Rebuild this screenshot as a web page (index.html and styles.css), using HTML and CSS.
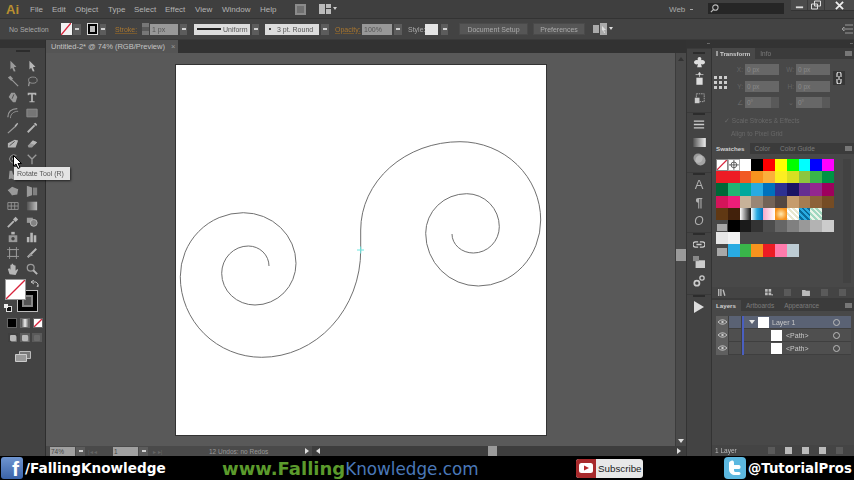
FILE: index.html
```html
<!DOCTYPE html>
<html lang="en">
<head>
<meta charset="utf-8">
<title>Adobe Illustrator</title>
<link rel="stylesheet" href="styles.css">
</head>
<body>
<div class="app">
  <header class="menubar">
    <span class="ai">Ai</span>
    <nav class="menus"><span class="m1">File</span><span class="m2">Edit</span><span class="m3">Object</span><span class="m4">Type</span><span class="m5">Select</span><span class="m6">Effect</span><span class="m7">View</span><span class="m8">Window</span><span class="m9">Help</span></nav>
    <span class="bridge"></span>
    <span class="arrange"><svg viewBox="0 0 18 10" width="18" height="10"><path fill="#bbb" d="M0 0h6v10H0zM7 0h5v4H7zM7 5h5v5H7z"/><path fill="#ccc" d="M14 3h4l-2 3z"/></svg></span>
    <span class="web">Web</span><span class="web-arrow"></span>
    <span class="search"><svg viewBox="0 0 10 10" width="9" height="9"><circle cx="6" cy="4" r="3" fill="none" stroke="#bbb" stroke-width="1.2"/><path d="M4 6L1 9" stroke="#bbb" stroke-width="1.4"/></svg></span>
    <span class="winctl">
      <span class="wbtn"><svg viewBox="0 0 10 10" width="9" height="9"><path d="M1 7h8" stroke="#ddd" stroke-width="2"/></svg></span>
      <span class="wbtn"><svg viewBox="0 0 10 10" width="10" height="10"><path d="M3.5 1h6v5h-6zM.5 4h6v5h-6z" fill="none" stroke="#ddd"/></svg></span>
      <span class="wbtn wide"><svg viewBox="0 0 10 10" width="9" height="9"><path d="M1 1l8 8M9 1L1 9" stroke="#eee" stroke-width="2"/></svg></span>
    </span>
  </header>

  <div class="controlbar">
    <span class="noselect">No Selection</span>
    <span class="sw-fill"><svg viewBox="0 0 10 12" width="10" height="12"><path d="M0 12L10 0" stroke="#d8243c" stroke-width="1.4"/></svg></span><span class="carrow a1"></span>
    <span class="sw-stroke"><i></i></span><span class="carrow a2"></span>
    <span class="olabel stroke-l">Stroke:</span>
    <span class="stepper"></span>
    <span class="inp w-stroke">1 px</span><span class="carrow a3"></span>
    <span class="lightbox w-uniform"><b class="line"></b>Uniform</span><span class="carrow a4"></span>
    <span class="lightbox w-round"><b class="dot"></b>3 pt. Round</span><span class="carrow a5"></span>
    <span class="olabel op-l">Opacity:</span>
    <span class="inp w-op">100%</span><span class="carrow a6"></span>
    <span class="plain style-l">Style:</span>
    <span class="style-sw"></span><span class="carrow a7"></span>
    <span class="cbtn w-doc">Document Setup</span>
    <span class="cbtn w-pref">Preferences</span>
    <svg class="isolate" viewBox="0 0 20 12" width="20" height="12"><path fill="#aaa" d="M0 2h6v8H0zM7 0h7v12H7z"/><path fill="#ddd" d="M9 3l4 4-2 0 1 3-1 0-1-3-1 1z"/><path fill="#ddd" d="M16 4h4l-2 3z"/></svg>
    <svg class="ctlmenu" viewBox="0 0 11 10" width="11" height="10"><path d="M3 1h8M3 5h8M3 9h8M0 5l2-2v4z" stroke="#999" fill="none"/></svg>
  </div>

  <div class="workspace">
    <aside class="toolbar">
      <div class="strip"></div>
      <div class="toolbody">
        <div class="grip"></div>
        <div class="tools">
          <svg class="ti" viewBox="0 0 14 14"><path class="f" d="M4 1l7 7-3 .5L10 13l-2 .5L6 9l-2 2z"/></svg>
          <svg class="ti" viewBox="0 0 14 14"><path class="f hi" d="M4 1l7 7-3 .5L10 13l-2 .5L6 9l-2 2z"/></svg>
          <svg class="ti" viewBox="0 0 14 14"><path class="s w" d="M6 6l7 7"/><path class="f" d="M1 3l3-2 3 3-2 3z"/></svg>
          <svg class="ti" viewBox="0 0 14 14"><ellipse class="s" cx="8" cy="6" rx="5" ry="3.6"/><path class="s w" d="M4 8l-1 5"/></svg>
          <svg class="ti" viewBox="0 0 14 14"><path class="f" d="M7 13L2 7l3-5 4 0 3 5-2 6z"/><path d="M6 9l2-5" stroke="#444"/></svg>
          <svg class="ti" viewBox="0 0 14 14"><path class="f hi" d="M2 2h10v3h-1l-1-1H8v8h2v1H4v-1h2V4H4L3 5H2z"/></svg>
          <svg class="ti" viewBox="0 0 14 14"><path class="s w" d="M1 12C1 6 5 2 12 2"/><path class="s" d="M4 13C4 8 8 5 13 5"/></svg>
          <svg class="ti" viewBox="0 0 14 14"><path fill="#7d7d7d" stroke="#999" d="M1 2.5h12v9H1z"/></svg>
          <svg class="ti" viewBox="0 0 14 14"><path class="s w" d="M1 13L10 5"/><path class="f hi" d="M9 4l3-3 1 1-3 4z"/></svg>
          <svg class="ti" viewBox="0 0 14 14"><path class="s wb" d="M2 12l8-8"/><path class="f hi" d="M9 2l3 3 1-2-2-2z"/></svg>
          <svg class="ti" viewBox="0 0 14 14"><path class="f hi" d="M1 6l8-4 4 1-3 8H1z"/><path d="M3 9l6-5" stroke="#444"/></svg>
          <svg class="ti" viewBox="0 0 14 14"><path class="f" d="M2 9l6-6 5 2-6 6H3z"/><path class="f hi" d="M8 3l5 2-3 3-5-2z"/></svg>
          <svg class="ti" viewBox="0 0 14 14"><path class="s" d="M11 11A5 5 0 1 1 11 3"/><circle class="f" cx="7" cy="7" r="1.3"/></svg>
          <svg class="ti" viewBox="0 0 14 14"><path class="s w" d="M2 2l5 5 5-5M7 7v6"/></svg>
          <svg class="ti" viewBox="0 0 14 14"><path class="f" d="M3 2l3 0 1 4 4 3-2 4-4-2-3 1z"/></svg>
          <svg class="ti" viewBox="0 0 14 14"><path class="s" d="M2 2h10v10H2z"/><path class="f" d="M5 1h4v12H5z"/></svg>
          <svg class="ti" viewBox="0 0 14 14"><path class="f" d="M1 6l5-4 7 3-1 6-6 1z"/><path class="s" d="M1 6l5 2 7-3M6 8v4" stroke="#444"/></svg>
          <svg class="ti" viewBox="0 0 14 14"><path class="f" d="M1 1l6 2v9l-6 2z"/><path fill="#888" d="M8 3h5v9H8z"/></svg>
          <svg class="ti" viewBox="0 0 14 14"><path class="s" d="M1 3h12v8H1zM1 7h12M5 3v8M9 3v8"/></svg>
          <svg class="ti" viewBox="0 0 14 14"><defs><linearGradient id="g1"><stop offset="0" stop-color="#555"/><stop offset="1" stop-color="#ccc"/></linearGradient></defs><path fill="url(#g1)" d="M1 2h12v10H1z"/></svg>
          <svg class="ti" viewBox="0 0 14 14"><path class="s wb" d="M1 13l7-7"/><path class="f hi" d="M7 4l3-3 3 3-3 3z"/></svg>
          <svg class="ti" viewBox="0 0 14 14"><path class="f" d="M1 2h7v6H1z"/><circle cx="9" cy="8" r="4" fill="#8a8a8a" stroke="#ccc"/></svg>
          <svg class="ti" viewBox="0 0 14 14"><path class="f" d="M2 5h10v8H2z"/><path class="f hi" d="M5 1h4v3H5z"/><circle cx="7" cy="9" r="2" fill="#444"/></svg>
          <svg class="ti" viewBox="0 0 14 14"><path class="f hi" d="M1 7h3v6H1zM5 2h3v11H5zM9 5h3v8H9z"/></svg>
          <svg class="ti" viewBox="0 0 14 14"><path class="s" d="M3 3h8v8H3zM0 3h14M0 11h14M3 0v14M11 0v14"/></svg>
          <svg class="ti" viewBox="0 0 14 14"><path class="s wb" d="M2 12L12 2"/><path class="f" d="M2 12l3-5 3 3z"/></svg>
          <svg class="ti" viewBox="0 0 14 14"><path class="f hi" d="M3 13L1 7l2-1 1 2V2h1.500v4-5H7v5-4h1.500v4-3H10v6l2-2 1 1-3 6z"/></svg>
          <svg class="ti" viewBox="0 0 14 14"><circle class="s w" cx="5.500" cy="5.500" r="4"/><path class="s wb" d="M8.500 8.500l4.500 4.500"/></svg>
        </div>
        <div class="fillstroke">
          <div class="stroke-box"><i></i></div>
          <div class="fill-box"><svg viewBox="0 0 21 21"><path d="M0 21L21 0" stroke="#d8243c" stroke-width="1.5"/></svg></div>
          <svg class="swap" viewBox="0 0 8 8" width="8" height="8"><path d="M0 2h5l2 2v3M6 7L7 5M3 0L0 2l3 2" fill="none" stroke="#bbb"/></svg>
          <svg class="deflt" viewBox="0 0 8 8" width="8" height="8"><rect x="2.500" y="2.500" width="5" height="5" fill="#111" stroke="#ddd"/><rect width="4" height="4" fill="#eee"/></svg>
        </div>
        <div class="modes">
          <span class="mode black"></span><span class="mode grad"></span>
          <span class="mode none"><svg viewBox="0 0 9 9"><path d="M0 9L9 0" stroke="#d8243c" stroke-width="1.500"/></svg></span>
        </div>
        <div class="draws"><span class="draw"></span><span class="draw on"></span><span class="draw dim"></span></div>
        <div class="screen"><svg viewBox="0 0 16 11" width="16" height="11"><path d="M4.500 .5h11v7h-11z" fill="#777" stroke="#bbb"/><path d="M.5 3.500h11v7H.5z" fill="#999" stroke="#ccc"/></svg></div>
      </div>
    </aside>

    <main class="doc">
      <div class="tabs"><div class="tab">Untitled-2* @ 74% (RGB/Preview) <em>×</em></div></div>
      <div class="stage">
        <div class="canvas">
          <div class="artboard">
            <svg class="art" viewBox="176 65 370 370" aria-label="Spiral artwork">
              <path class="curve" d="M269 266A20.700 20 0 0 0 248.300 246A26.600 27.300 0 0 0 221.700 273.300A33.300 31.700 0 0 0 255 305A41 41.700 0 0 0 296 263.300A52.700 50.600 0 0 0 243.300 212.700A63 64 0 0 0 180.300 276.700A81.400 80.600 0 0 0 261.700 357.300A99 107 0 0 0 360.700 250L360.700 230A99.300 88.300 0 0 1 460 141.700A80.700 78.300 0 0 1 540.700 220A62.400 66 0 0 1 478.300 286A52.600 52.700 0 0 1 425.700 233.300A41 39.600 0 0 1 466.700 193.700A32.600 33 0 0 1 499.300 226.700A26 26.300 0 0 1 473.300 253A21.300 19 0 0 1 452 234"/>
              <path class="mark" d="M357 250h7M360.700 246.500v7"/>
            </svg>
          </div>
        </div>
        <div class="vscroll"><span class="up"></span><span class="vthumb"></span><span class="down"></span></div>
      </div>
      <div class="status">
        <span class="sinp w-zoom">74%</span><span class="carrow s1"></span>
        <span class="nav n1">|◂ ◂</span>
        <span class="sinp w-page">1</span><span class="carrow s2"></span>
        <span class="nav n2">▸ ▸|</span>
        <span class="undos">12 Undos: no Redos</span>
        <span class="tri-r"></span>
        <div class="hscroll"><span class="tri-l"></span><span class="hthumb"></span><span class="tri-r end"></span></div>
      </div>
    </main>

    <aside class="dock">
      <div class="strip"><span class="dots">▪▪</span></div>
      <div class="dockbody">
        <div class="dgroup g1">
          <svg viewBox="0 0 14 14" width="11" height="11"><path fill="#ddd" d="M7 0c2 0 3 2 2 4 3-1 5 1 5 3s-3 3-5 2l1 4H4l1-4c-2 1-5 0-5-2s2-4 5-3C4 2 5 0 7 0z"/></svg>
          <svg viewBox="0 0 14 16" width="11" height="13"><path fill="#ddd" d="M3 7h8v9H3z"/><path stroke="#ccc" d="M7 0v6M2 3h10" fill="none"/><circle cx="7" cy="2" r="1.500" fill="#ddd"/></svg>
          <svg viewBox="0 0 14 14" width="11" height="11"><path fill="none" stroke="#bbb" stroke-dasharray="2 1" d="M3 1h10v10H3z"/><path fill="#ccc" d="M1 6h6v7H1z"/></svg>
        </div>
        <div class="dgroup g2">
          <svg viewBox="0 0 14 10" width="12" height="9"><path stroke="#ccc" stroke-width="1.500" d="M1 1h12M1 5h12M1 9h12"/></svg>
          <svg viewBox="0 0 14 10" width="13" height="9"><defs><linearGradient id="g2"><stop offset="0" stop-color="#555"/><stop offset="1" stop-color="#f0f0f0"/></linearGradient></defs><path fill="url(#g2)" d="M0 0h14v10H0z"/></svg>
          <svg viewBox="0 0 14 14" width="13" height="13"><circle cx="5.500" cy="5.500" r="5" fill="#999"/><circle cx="8" cy="8" r="5.500" fill="#c4c4c4" opacity=".75"/></svg>
        </div>
        <div class="dgroup g3">
          <span class="dtxt">A</span><span class="dtxt para">¶</span><span class="dtxt ot">O</span>
        </div>
        <div class="dgroup g4">
          <svg viewBox="0 0 14 8" width="12" height="7"><path fill="none" stroke="#ccc" stroke-width="1.500" d="M6 1H3a3 3 0 0 0 0 6h3M8 1h3a3 3 0 0 1 0 6H8M4 4h6"/></svg>
          <svg viewBox="0 0 14 14" width="12" height="12"><path fill="#ccc" d="M3 5h11v9H3z"/><path fill="#888" d="M0 0h7v6H0z"/></svg>
          <svg viewBox="0 0 14 14" width="12" height="12"><circle cx="4.500" cy="9.500" r="3" fill="none" stroke="#ccc" stroke-width="2"/><circle cx="10.500" cy="3.500" r="2.500" fill="none" stroke="#ccc" stroke-width="1.500"/></svg>
        </div>
        <div class="dgroup g5">
          <svg viewBox="0 0 10 12" width="10" height="12"><path fill="#ddd" d="M0 0l10 6-10 6z"/></svg>
        </div>
      </div>
    </aside>

    <aside class="panels">
      <div class="strip"><span class="dots">▪▪</span></div>

      <section class="panel p-transform">
        <div class="ptabs"><span class="ptab on">Transform</span><span class="ptab">Info</span><span class="pmenu"></span></div>
        <div class="tbody">
          <div class="refgrid"><i></i><i></i><i></i><i></i><i></i><i></i><i></i><i></i><i></i></div>
          <div class="fields">
            <label>X:</label><span class="finp">0 px</span><label>W:</label><span class="finp">0 px</span>
            <label>Y:</label><span class="finp">0 px</span><label>H:</label><span class="finp">0 px</span>
            <label>∠</label><span class="finp sel">0°</span><label>⌄</label><span class="finp sel">0°</span>
          </div>
          <span class="linkbtn"><svg viewBox="0 0 6 12" width="6" height="12"><path d="M1 5V2a2 2 0 0 1 4 0v3M1 7v3a2 2 0 0 0 4 0V7M3 4v4" fill="none" stroke="#ddd" stroke-width="1.200"/></svg></span>
        </div>
        <div class="chk c1">✓ Scale Strokes &amp; Effects</div>
        <div class="chk c2">Align to Pixel Grid</div>
      </section>

      <section class="panel p-swatches">
        <div class="ptabs"><span class="ptab on">Swatches</span><span class="ptab">Color</span><span class="ptab">Color Guide</span><span class="pmenu"></span></div>
        <div class="swbody">
          <div class="swatches">
            <i class="sn"><svg viewBox="0 0 12 12"><path d="M0 12L12 0" stroke="#d8243c" stroke-width="1.500"/></svg></i>
            <i class="st"><svg viewBox="0 0 12 12"><circle cx="6" cy="6" r="3.500" fill="none" stroke="#444"/><path d="M6 0v12M0 6h12" stroke="#444"/></svg></i>
            <i class="c-fff"></i><i class="c-000"></i><i class="c-f00"></i><i class="c-ff0"></i><i class="c-0f0"></i><i class="c-0ff"></i><i class="c-00f"></i><i class="c-f0f"></i>
            <i class="c-ed1"></i><i class="c-ed1b"></i><i class="c-f15"></i><i class="c-f79"></i><i class="c-fbb"></i><i class="c-fce"></i><i class="c-d9e"></i><i class="c-8cc"></i><i class="c-39b"></i><i class="c-009"></i>
            <i class="c-006"></i><i class="c-22b"></i><i class="c-00a"></i><i class="c-29a"></i><i class="c-007"></i><i class="c-2e3"></i><i class="c-1b1"></i><i class="c-662"></i><i class="c-932"></i><i class="c-9e0"></i>
            <i class="c-d41"></i><i class="c-ed2"></i><i class="c-c7b"></i><i class="c-998"></i><i class="c-736"></i><i class="c-534"></i><i class="c-c69"></i><i class="c-a67"></i><i class="c-8c6"></i><i class="c-754"></i>
            <i class="c-603"></i><i class="c-422"></i><i class="gr1"></i><i class="gr2"></i><i class="gr3"></i><i class="gr4"></i><i class="pt1"></i><i class="pt2"></i><i class="pt3"></i><i class="blank"></i>
            <i class="folder"></i><i class="c-000"></i><i class="c-1a"></i><i class="c-33"></i><i class="c-4d"></i><i class="c-66"></i><i class="c-80"></i><i class="c-99"></i><i class="c-b3"></i><i class="c-cc"></i>
            <i class="c-e6"></i><i class="c-f2"></i><i class="blank"></i><i class="blank"></i><i class="blank"></i><i class="blank"></i><i class="blank"></i><i class="blank"></i><i class="blank"></i><i class="blank"></i>
            <i class="folder"></i><i class="c-29a"></i><i class="c-39b"></i><i class="c-f79"></i><i class="c-ed1"></i><i class="c-ff7"></i><i class="c-bdc"></i>
          </div>
          <div class="swscroll"></div>
        </div>
        <div class="pfoot swfoot">
          <svg class="fic" viewBox="0 0 9 8"><path fill="#bbb" d="M0 0h1.500v8H0zM2.500 0H4v8H2.500zM5 1l1.500-.5 2 7L7 8z"/></svg>
          <svg class="fic spread" viewBox="0 0 9 8"><path fill="#bbb" d="M0 0h3v3H0zM4 0h3v3H4zM0 4h3v3H0zM4 4h3v3H4z"/><path fill="#ddd" d="M7 6h2L8 8z"/></svg>
          <span class="fi dim"></span>
          <svg class="fic" viewBox="0 0 9 8"><path fill="#bbb" d="M0 1h3.500l1 1H9v6H0z"/></svg>
          <span class="fi dim"></span><span class="fi dim"></span>
        </div>
      </section>

      <section class="panel p-layers">
        <div class="ptabs"><span class="ptab on">Layers</span><span class="ptab">Artboards</span><span class="ptab">Appearance</span><span class="pmenu"></span></div>
        <div class="lbody">
          <div class="lrow top">
            <span class="eye"><svg viewBox="0 0 10 6" width="9" height="6"><path d="M0 3q5-5 10 0q-5 5-10 0z" fill="none" stroke="#ccc"/><circle cx="5" cy="3" r="1.300" fill="#ccc"/></svg></span><span class="lock"></span><span class="bar"></span>
            <span class="disc"></span><span class="thumb big"></span><span class="lname">Layer 1</span><span class="tgt"></span>
          </div>
          <div class="lrow">
            <span class="eye"><svg viewBox="0 0 10 6" width="9" height="6"><path d="M0 3q5-5 10 0q-5 5-10 0z" fill="none" stroke="#ccc"/><circle cx="5" cy="3" r="1.300" fill="#ccc"/></svg></span><span class="lock"></span><span class="bar"></span>
            <span class="indent"></span><span class="thumb"></span><span class="lname">&lt;Path&gt;</span><span class="tgt"></span>
          </div>
          <div class="lrow">
            <span class="eye"><svg viewBox="0 0 10 6" width="9" height="6"><path d="M0 3q5-5 10 0q-5 5-10 0z" fill="none" stroke="#ccc"/><circle cx="5" cy="3" r="1.300" fill="#ccc"/></svg></span><span class="lock"></span><span class="bar"></span>
            <span class="indent"></span><span class="thumb"></span><span class="lname">&lt;Path&gt;</span><span class="tgt"></span>
          </div>
        </div>
        <div class="pfoot lfoot">
          <span class="lcount">1 Layer</span>
          <span class="fi dim"></span><span class="fi"></span><span class="fi"></span><span class="fi"></span><span class="fi dim"></span>
        </div>
      </section>
    </aside>

    <div class="tooltip">Rotate Tool (R)</div>
    <svg class="cursor" viewBox="0 0 9 14" width="9" height="14"><path d="M.5.5v10.500l2.500-2 2 4.500 2-1-2-4h3.500z" fill="#fff" stroke="#000"/></svg>
  </div>

  <footer class="promo">
    <span class="fb">f</span>
    <span class="handle h-fb">/FallingKnowledge</span>
    <span class="site"><b class="g">www.Falling</b><span class="bl">Knowledge.com</span></span>
    <span class="yt"><span class="yt-r"><svg viewBox="0 0 14 10" width="14" height="10"><rect width="14" height="10" rx="2.500" fill="#fff"/><path d="M5 2.500l5 2.500-5 2.500z" fill="#b5292c"/></svg></span><span class="yt-t">Subscribe</span></span>
    <span class="tw"><svg viewBox="0 0 22 22" width="22" height="22"><path fill="#fff" d="M7 4c2-1 3 0 3 2v2h5c2 0 2 4 0 4h-5v1c0 2 1 2 2 2h3c2 0 2 3 0 3h-4c-3 0-6-2-6-6V6c0-1 1-2 2-2z"/></svg></span>
    <span class="handle h-tw">@TutorialPros</span>
  </footer>
</div>
</body>
</html>
```

FILE: styles.css
```css
* { box-sizing: border-box; }
html, body { margin: 0; padding: 0; }
body { width: 854px; height: 480px; overflow: hidden; background: #000; font-family: "Liberation Sans", Arial, sans-serif; }
svg { display: block; flex: none; }
i, em { font-style: normal; }

.app { width: 854px; height: 480px; display: flex; flex-direction: column; filter: blur(.5px); }

/* Menu bar */
.menubar { height: 19px; flex: none; background: #3f3f3f; display: flex; align-items: center; color: #b4b4b4; font-size: 8px; border-bottom: 1px solid #333; }
.menubar > * { flex: none; }
.ai { width: 30px; padding-left: 6px; color: #b98f30; font-weight: bold; font-size: 13px; }
.menus { display: flex; width: 262px; }
.menus span { display: block; }
.m1 { width: 22px; } .m2 { width: 23px; } .m3 { width: 33px; } .m4 { width: 26px; } .m5 { width: 31px; } .m6 { width: 30px; } .m7 { width: 27px; } .m8 { width: 38px; } .m9 { width: 32px; }
.bridge { width: 11px; height: 11px; margin-left: 3px; background: #707070; border: 2px solid #8b8b8b; }
.arrange { margin-left: 13px; }
.web { margin-left: 332px; width: 19px; color: #aaa; }
.web-arrow { width: 3px; height: 1px; background: #aaa; margin-right: 15px; margin-left: 2px; }
.search { width: 76px; height: 11px; margin-top: -2px; background: #262626; padding: 1px 0 0 2px; }
.winctl { display: flex; margin-left: 7px; height: 11px; align-self: flex-start; background: #4b4b4b; border-bottom: 1px solid #333; }
.wbtn { width: 17px; display: flex; align-items: center; justify-content: center; border-right: 1px solid #3a3a3a; }
.wbtn.wide { width: 29px; border: 0; }

/* Control bar */
.controlbar { height: 21px; flex: none; background: #434343; display: flex; align-items: center; font-size: 7px; color: #a8a8a8; border-bottom: 1px solid #3a3a3a; position: relative; }
.controlbar > * { flex: none; }
.noselect { margin-left: 9px; width: 52px; }
.sw-fill { width: 11px; height: 12px; background: #f2f2f2; }
.carrow { width: 8px; height: 11px; background: #5c5c5c; position: relative; flex: none; }
.carrow::after { content: ""; display: block; width: 4px; height: 2px; background: #d0d0d0; margin: 4px auto 0; }
.a1 { margin-left: 1px; }
.sw-stroke { width: 11px; height: 12px; margin-left: 6px; background: #000; border: 1px solid #ddd; padding: 2px; }
.sw-stroke i { display: block; width: 5px; height: 6px; background: #bbb; }
.a2 { margin-left: 2px; width: 6px; }
.olabel { color: #a8762f; text-decoration: underline; text-decoration-color: #775a30; }
.stroke-l { margin-left: 9px; width: 27px; }
.stepper { width: 7px; height: 12px; background: #5a5a5a; border-top: 4px solid #777; border-bottom: 4px solid #777; }
.inp { height: 11px; line-height: 11px; background: #989898; color: #555; padding-left: 2px; }
.w-stroke { width: 28px; margin-left: 1px; }
.a3 { margin-left: 2px; width: 7px; }
.lightbox { height: 11px; line-height: 11px; background: #dcdcdc; color: #555; display: flex; align-items: center; white-space: nowrap; }
.w-uniform { width: 56px; margin-left: 7px; padding-left: 3px; }
.line { width: 24px; height: 2px; background: #222; margin-right: 2px; }
.a4 { margin-left: 2px; width: 7px; }
.w-round { width: 54px; margin-left: 6px; padding-left: 4px; }
.dot { width: 2px; height: 2px; background: #444; margin-right: 6px; }
.a5 { margin-left: 2px; }
.op-l { margin-left: 6px; width: 27px; }
.w-op { width: 30px; }
.a6 { margin-left: 2px; }
.plain { color: #aaa; }
.style-l { margin-left: 6px; width: 17px; }
.style-sw { width: 13px; height: 11px; background: #e4e4e4; }
.a7 { margin-left: 3px; width: 7px; }
.cbtn { height: 12px; line-height: 11px; text-align: center; background: #565656; color: #aaa; border: 1px solid #4a4a4a; }
.w-doc { width: 69px; margin-left: 11px; }
.w-pref { width: 52px; margin-left: 5px; }
.isolate { margin-left: 8px; }
.ctlmenu { margin-left: 229px; }

/* Workspace */
.workspace { flex: 1; min-height: 0; display: flex; position: relative; background: #3a3a3a; }
.strip { height: 8px; background: #333; position: relative; color: #888; font-size: 4px; line-height: 8px; text-align: right; }
.dots { padding-right: 1px; }

/* Tools */
.toolbar { width: 46px; flex: none; display: flex; flex-direction: column; background: #434343; border-right: 1px solid #2e2e2e; }
.toolbody { flex: 1; padding-left: 3px; }
.grip { height: 2px; width: 14px; margin: 2px 0 0 13px; background: #2c2c2c; }
.tools { display: grid; grid-template-columns: 19px 19px; grid-auto-rows: 15.600px; margin-top: 6px; justify-items: center; align-items: center; }
.ti { width: 12px; height: 12px; opacity: .9; }
.f { fill: #a4a4a4; }
.hi { fill: #c4c4c4; }
.s { fill: none; stroke: #a4a4a4; }
.w { stroke-width: 1.500px; }
.wb { stroke-width: 2.200px; stroke: #c4c4c4; }

.fillstroke { position: relative; margin-top: 3px; width: 36px; height: 33px; }
.fill-box { position: absolute; left: 2px; top: 0; width: 21px; height: 21px; background: #fff; border: 1px solid #999; }
.stroke-box { position: absolute; left: 14px; top: 11px; width: 21px; height: 22px; background: #000; border: 1px solid #bbb; padding: 4px; }
.stroke-box i { display: block; width: 11px; height: 12px; background: #555; border: 2px solid #888; }
.swap { position: absolute; left: 28px; top: 1px; }
.deflt { position: absolute; left: 1px; top: 25px; }
.modes { display: flex; gap: 3px; margin-top: 6px; padding-left: 4px; }
.mode { width: 10px; height: 10px; border: 1px solid #666; }
.black { background: #000; }
.grad { background: linear-gradient(90deg, #444, #eee, #555); }
.none { background: #fff; }
.draws { display: flex; gap: 2px; margin-top: 5px; padding-left: 5px; }
.draw { width: 10px; height: 9px; background: #3f3f3f; display: flex; align-items: center; justify-content: center; }
.draw::before { content: ""; width: 6px; height: 6px; border-radius: 1px; background: #b8b8b8; box-shadow: 1px 1px 0 #777; }
.draw.on { background: #5e5e5e; }
.draw.dim { background: #5a5a5a; }
.draw.dim::before { background: #6a6a6a; box-shadow: none; }
.screen { margin: 9px 0 0 12px; }

/* Document */
.doc { width: 640px; flex: none; display: flex; flex-direction: column; }
.tabs { height: 13px; flex: none; background: #323232; }
.tab { width: 132px; height: 13px; background: #555; color: #c4c4c4; font-size: 7.500px; line-height: 13px; padding-left: 5px; white-space: nowrap; }
.tab em { color: #999; margin-left: 4px; }
.stage { flex: 1; min-height: 0; display: flex; }
.canvas { flex: 1; background: #595959; padding: 12px 0 0 130px; }
.artboard { width: 370px; height: 370px; background: #fff; box-shadow: 0 0 0 1px #333; }
.art { width: 370px; height: 370px; }
.curve { fill: none; stroke: #707070; stroke-width: 1; }
.mark { fill: none; stroke: #6fe6e0; stroke-width: 1; }
.vscroll { width: 11px; flex: none; background: #4a4a4a; display: flex; flex-direction: column; align-items: center; border-left: 1px solid #3c3c3c; }
.vthumb { width: 10px; height: 12px; margin-top: 188px; background: #9a9a9a; }
.up { width: 0; height: 0; margin-top: 4px; border: 3px solid transparent; border-top: 0; border-bottom: 4px solid #333; }
.down { width: 0; height: 0; margin-top: auto; margin-bottom: 3px; border: 3px solid transparent; border-bottom: 0; border-top: 4px solid #ddd; }

.status { height: 10px; flex: none; background: #4a4a4a; display: flex; align-items: center; font-size: 6.500px; color: #999; }
.status > * { flex: none; }
.sinp { height: 9px; line-height: 9px; background: #a0a0a0; color: #444; padding-left: 1px; }
.status .carrow { height: 9px; }
.status .carrow::after { margin-top: 3px; }
.w-zoom { width: 25px; margin-left: 4px; }
.s1 { margin-left: 1px; width: 9px; }
.nav { color: #666; font-size: 6px; }
.n1 { width: 25px; margin-left: 3px; }
.w-page { width: 25px; }
.s2 { margin-left: 1px; width: 9px; }
.n2 { width: 56px; margin-left: 5px; }
.undos { width: 96px; }
.tri-r { width: 0; height: 0; border: 3px solid transparent; border-right: 0; border-left: 4px solid #ddd; }
.status .hscroll { flex: 1; height: 10px; margin-left: 3px; background: #3d3d3d; display: flex; align-items: center; padding-left: 4px; }
.tri-l { width: 0; height: 0; border: 3px solid transparent; border-left: 0; border-right: 4px solid #ddd; }
.hthumb { width: 9px; height: 10px; margin-left: 168px; background: #9a9a9a; }
.tri-r.end { margin-left: auto; margin-right: 5px; }

/* Dock */
.dock { width: 26px; flex: none; display: flex; flex-direction: column; background: #434343; border-right: 1px solid #333; border-left: 1px solid #333; }
.dockbody { flex: 1; display: flex; flex-direction: column; }
.dgroup { display: flex; flex-direction: column; align-items: center; border-top: 1px solid #3a3a3a; }
.dgroup::before { content: ""; width: 12px; height: 2px; flex: none; background: #2c2c2c; }
.g1 { height: 64px; padding-top: 3px; }
.g1 svg:nth-of-type(1) { margin-top: 3px; }
.g1 svg:nth-of-type(2) { margin-top: 4px; }
.g1 svg:nth-of-type(3) { margin-top: 8px; }
.g2 { height: 60px; }
.g2 svg:nth-of-type(1) { margin-top: 5px; }
.g2 svg:nth-of-type(2) { margin-top: 9px; }
.g2 svg:nth-of-type(3) { margin-top: 6px; }
.g3 { height: 60px; gap: 2px; }
.dtxt { height: 16px; line-height: 16px; font-size: 13px; color: #b0b0b0; }
.para { font-weight: bold; }
.ot { font-style: italic; font-size: 12px; }
.g4 { height: 62px; }
.g4 svg:nth-of-type(1) { margin-top: 6px; }
.g4 svg:nth-of-type(2) { margin-top: 8px; }
.g4 svg:nth-of-type(3) { margin-top: 7px; }
.g5 svg { margin-top: 4px; }

/* Panels */
.panels { flex: 1; min-width: 0; display: flex; flex-direction: column; background: #3a3a3a; }
.panel { display: flex; flex-direction: column; background: #484848; font-size: 7px; color: #999; }
.ptabs { height: 11px; flex: none; display: flex; align-items: stretch; background: #3b3b3b; line-height: 11px; position: relative; font-size: 6.500px; }
.ptab { padding: 0 5px; color: #7b7b7b; white-space: nowrap; }
.ptab.on { background: #484848; color: #cfcfcf; font-weight: bold; font-size: 6.200px; padding: 0 5px 0 4px; }
.p-transform .ptab.on { padding-left: 8px; }
.p-transform .ptab.on::before { content: ""; display: inline-block; width: 2px; height: 5px; margin: 0 2px 0 -4px; background: #9a9a9a; }
.pmenu { width: 7px; height: 5px; margin: 3px 2px 0 auto; background: #777; }

.p-transform { height: 95px; }
.tbody { display: flex; padding-top: 5px; height: 44px; }
.refgrid { display: grid; grid-template-columns: repeat(3, 3px); grid-auto-rows: 3px; gap: 2px; margin: 12px 0 0 2px; width: 14px; flex: none; }
.refgrid i { background: #ccc; }
.fields { display: grid; grid-template-columns: 17px 34px 17px 34px; grid-auto-rows: 11px; row-gap: 5.500px; width: 102px; flex: none; color: #666; font-size: 6.500px; }
.fields label { text-align: right; padding-right: 2px; line-height: 11px; }
.finp { background: #676767; color: #8a8a8a; line-height: 11px; padding-left: 2px; }
.sel { border-right: 8px solid #595959; }
.linkbtn { width: 12px; height: 14px; margin: 7px 0 0 3px; background: #363636; display: flex; align-items: center; justify-content: center; flex: none; }
.chk { padding-left: 12px; color: #686868; font-size: 6.500px; }
.c1 { margin-top: 14px; }
.c2 { margin-top: 5px; padding-left: 19px; }

.p-swatches { height: 155px; }
.swbody { flex: 1; display: flex; padding: 5px 0 0 4px; min-height: 0; background: #484848; }
.swatches { display: grid; grid-template-columns: repeat(10, 11.800px); grid-auto-rows: 12.200px; width: 118px; align-content: start; flex: none; }
.swatches i { display: block; }
.sn { background: #fff; border: 1px solid #888; }
.st { background: #fff; border: 1px solid #aaa; }
.swscroll { width: 8px; margin: 0 3px 4px auto; background: #424242; }
.c-fff { background: #fff; } .c-000 { background: #000; } .c-f00 { background: #f00; } .c-ff0 { background: #ff0; } .c-0f0 { background: #0f0; } .c-0ff { background: #0ff; } .c-00f { background: #00f; } .c-f0f { background: #f0f; }
.c-ed1 { background: #ed1c24; } .c-ed1b { background: #ed1c24; } .c-f15 { background: #f15a24; } .c-f79 { background: #f7931e; } .c-fbb { background: #fbb03b; } .c-fce { background: #fcee21; } .c-d9e { background: #d9e021; } .c-8cc { background: #8cc63f; } .c-39b { background: #39b54a; } .c-009 { background: #009245; }
.c-006 { background: #006837; } .c-22b { background: #22b573; } .c-00a { background: #00a99d; } .c-29a { background: #29abe2; } .c-007 { background: #0071bc; } .c-2e3 { background: #2e3192; } .c-1b1 { background: #1b1464; } .c-662 { background: #662d91; } .c-932 { background: #93278f; } .c-9e0 { background: #9e005d; }
.c-d41 { background: #d4145a; } .c-ed2 { background: #ed1e79; } .c-c7b { background: #c7b299; } .c-998 { background: #998675; } .c-736 { background: #736357; } .c-534 { background: #534741; } .c-c69 { background: #c69c6d; } .c-a67 { background: #a67c52; } .c-8c6 { background: #8c6239; } .c-754 { background: #754c24; }
.c-603 { background: #603813; } .c-422 { background: #42210b; }
.gr1 { background: linear-gradient(90deg, #fff, #111); }
.gr2 { background: linear-gradient(90deg, #fff, #29abe2, #0071bc); }
.gr3 { background: linear-gradient(90deg, #f7a8c8, #fff); }
.gr4 { background: radial-gradient(circle, #ffe9b0, #f7931e 70%); }
.pt1 { background: repeating-linear-gradient(45deg, #e8e8d0 0 2px, #fff 2px 4px); }
.pt2 { background: repeating-linear-gradient(45deg, #29abe2 0 2px, #0a6a9a 2px 4px); }
.pt3 { background: repeating-linear-gradient(45deg, #9fd8c0 0 2px, #e8f4e8 2px 4px); }
.blank { background: transparent; }
.folder { background: linear-gradient(#484848 25%, #a8a8a8 25%); margin: 1px; }
.c-1a { background: #1a1a1a; } .c-33 { background: #333; } .c-4d { background: #4d4d4d; } .c-66 { background: #666; } .c-80 { background: #808080; } .c-99 { background: #999; } .c-b3 { background: #b3b3b3; } .c-cc { background: #ccc; } .c-e6 { background: #e6e6e6; } .c-f2 { background: #f2f2f2; } .c-ff7 { background: #ff7bac; } .c-bdc { background: #bdccd4; }
.pfoot { height: 11px; flex: none; display: flex; align-items: center; gap: 11px; background: #444; }
.fi { width: 7px; height: 7px; background: #bbb; }
.fi.dim { background: #5a5a5a; }
.fic { width: 8px; height: 7px; }
.swfoot { padding-left: 6px; }
.spread { margin-left: 28px; }

.p-layers { flex: 1; margin-top: 2px; min-height: 0; }
.lbody { flex: 1; padding: 5px 3px 0 4px; }
.lrow { height: 13px; display: flex; align-items: center; background: #4f4f4f; border-bottom: 1px solid #3f3f3f; }
.lrow.top { background: #5a6274; }
.eye { width: 13px; height: 13px; display: flex; align-items: center; justify-content: center; background: #5f5f5f; border-right: 1px solid #3f3f3f; }
.lock { width: 13px; height: 13px; border-right: 1px solid #3f3f3f; }
.bar { width: 2px; height: 13px; background: #4a5fc0; }
.disc { width: 0; height: 0; margin-left: 5px; border: 3px solid transparent; border-bottom: 0; border-top: 4px solid #e4e4e4; }
.thumb { width: 11px; height: 11px; background: #fff; }
.thumb.big { margin-left: 3px; }
.indent { width: 27px; }
.lname { margin-left: 4px; color: #c8c8c8; font-size: 7px; }
.top .lname { margin-left: 3px; }
.tgt { width: 7px; height: 7px; margin-left: auto; margin-right: 11px; border: 1px solid #bbb; border-radius: 50%; }
.lfoot { padding-left: 3px; color: #bbb; font-size: 6.500px; gap: 10px; }
.lcount { width: 43px; }

/* Overlays */
.tooltip { position: absolute; left: 14px; top: 127px; width: 56px; height: 13px; line-height: 13px; background: #e4e4e4; color: #555; font-size: 7px; padding-left: 3px; box-shadow: 1px 1px 2px rgba(0,0,0,.6); white-space: nowrap; }
.cursor { position: absolute; left: 13px; top: 115px; }

/* Promo footer */
.promo { height: 24px; flex: none; background: #000; display: flex; align-items: center; color: #fff; }
.promo > * { flex: none; }
.fb { width: 22px; height: 22px; margin-left: 1px; background: linear-gradient(#6f95d0, #3b63a8); border-radius: 3px; color: #fff; font: bold 21px/24px "Liberation Sans", sans-serif; text-align: right; padding-right: 4px; overflow: hidden; }
.handle { font-family: "DejaVu Sans", sans-serif; font-weight: bold; white-space: nowrap; }
.h-fb { font-size: 13.600px; width: 197px; margin-left: 2px; }
.site { width: 354px; font-family: "DejaVu Sans", sans-serif; white-space: nowrap; }
.g { color: #5b9a2c; font-size: 18px; }
.bl { color: #4a78b8; font-weight: normal; font-size: 16.800px; }
.yt { width: 67px; height: 19px; display: flex; border-radius: 3px; overflow: hidden; background: #e8e8e8; }
.yt-r { width: 20px; background: #a82a2c; display: flex; align-items: center; justify-content: center; }
.yt-t { flex: 1; color: #222; font-size: 9.800px; line-height: 19px; padding-left: 2px; }
.tw { width: 22px; height: 22px; margin-left: 81px; background: #5cb8e0; border-radius: 4px; }
.h-tw { font-size: 13.300px; margin-left: 2px; }
```
